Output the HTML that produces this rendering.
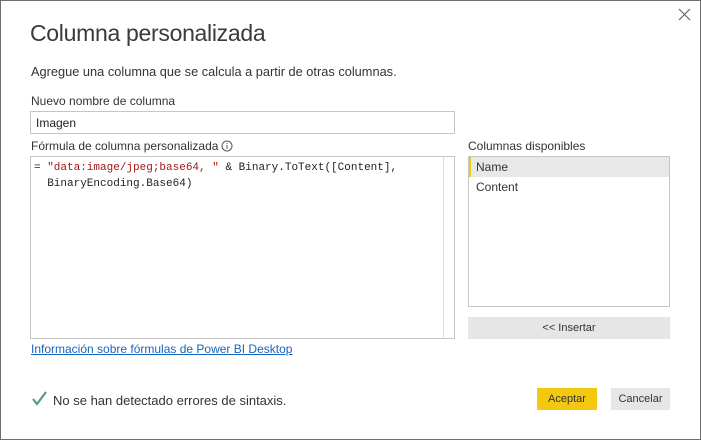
<!DOCTYPE html>
<html><head><meta charset="utf-8"><style>
*{margin:0;padding:0;box-sizing:border-box}
body{width:701px;height:440px;background:#fff;font-family:"Liberation Sans",sans-serif;color:#333;position:relative;overflow:hidden}
.win{position:absolute;left:0;top:0;width:701px;height:440px;border:1px solid #6e6e6e}
.a{position:absolute;white-space:nowrap}
.box{position:absolute;border:1px solid #c6c6c6;background:#fff}
.mono{font-family:"Liberation Mono",monospace;font-size:11px;line-height:16px;color:#222}
</style></head><body>
<div class="win"></div>
<svg class="a" style="left:678px;top:8px" width="13" height="13" viewBox="0 0 13 13"><path d="M1 1L12 12M12 1L1 12" stroke="#666" stroke-width="1.2"/></svg>
<div class="a" style="left:30px;top:20px;font-size:23px;color:#3a3a3a;letter-spacing:-0.3px">Columna personalizada</div>
<div class="a" style="left:31px;top:64px;font-size:12.8px;color:#333">Agregue una columna que se calcula a partir de otras columnas.</div>
<div class="a" style="left:31px;top:94px;font-size:12px;color:#333">Nuevo nombre de columna</div>
<div class="box" style="left:30px;top:111px;width:425px;height:23px"></div>
<div class="a" style="left:36px;top:116px;font-size:12px;color:#222">Imagen</div>
<div class="a" style="left:31px;top:139px;font-size:12px;color:#333">Fórmula de columna personalizada</div>
<svg class="a" style="left:221px;top:140px" width="12" height="12" viewBox="0 0 12 12"><circle cx="6" cy="6" r="5" fill="none" stroke="#555"/><path d="M6 5v4M6 3v1" stroke="#555"/></svg>
<div class="box" style="left:30px;top:156px;width:425px;height:183px"></div>
<div class="a" style="left:443px;top:157px;width:1px;height:181px;background:#ddd"></div>
<div class="a mono" style="left:34px;top:160px">= <span style="color:#a31515">"data:image/jpeg;base64, "</span> &amp; Binary.ToText([Content],<br>&nbsp;&nbsp;BinaryEncoding.Base64)</div>
<div class="a" style="left:468px;top:139px;font-size:12px;color:#333">Columnas disponibles</div>
<div class="box" style="left:468px;top:156px;width:202px;height:151px"></div>
<div class="a" style="left:469px;top:157px;width:200px;height:20px;background:#e8e8e8;border-left:2px solid #f2c811"></div>
<div class="a" style="left:476px;top:160px;font-size:12px;color:#333">Name</div>
<div class="a" style="left:476px;top:180px;font-size:12px;color:#333">Content</div>
<div class="a" style="left:468px;top:317px;width:202px;height:22px;background:#e6e6e6;font-size:11px;text-align:center;line-height:22px;color:#333">&lt;&lt; Insertar</div>
<div class="a" style="left:31px;top:342px;font-size:12px;color:#1565c0;text-decoration:underline">Información sobre fórmulas de Power BI Desktop</div>
<svg class="a" style="left:31px;top:391px" width="17" height="16" viewBox="0 0 17 16"><path d="M2 8l4 5 9-12" fill="none" stroke="#5a9a78" stroke-width="2.2"/></svg>
<div class="a" style="left:53px;top:393px;font-size:13px;color:#333">No se han detectado errores de sintaxis.</div>
<div class="a" style="left:537px;top:388px;width:60px;height:22px;background:#f2c811;font-size:11px;text-align:center;line-height:22px;color:#333">Aceptar</div>
<div class="a" style="left:611px;top:388px;width:59px;height:22px;background:#e6e6e6;font-size:11px;text-align:center;line-height:22px;color:#333">Cancelar</div>
</body></html>
